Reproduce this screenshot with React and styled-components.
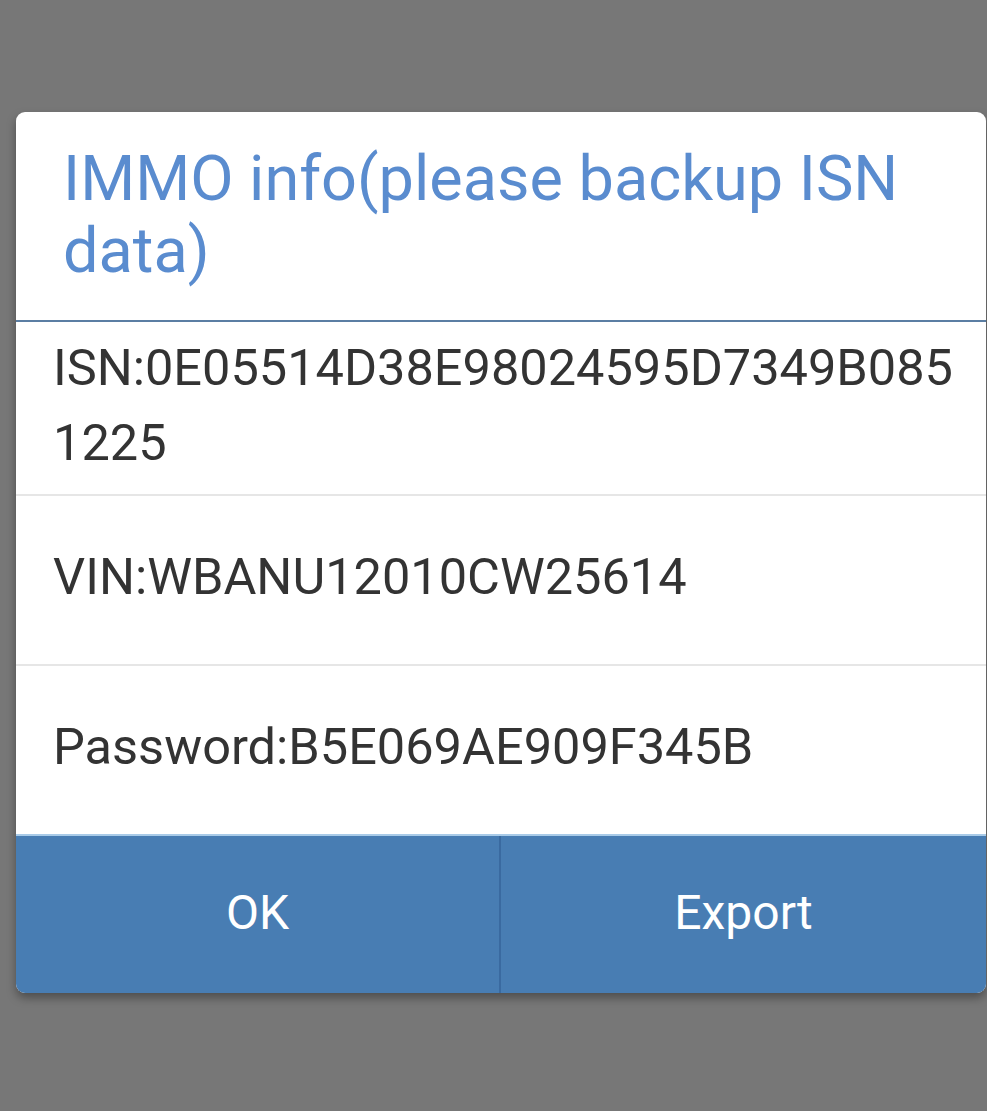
import React from "react";
import styled, { createGlobalStyle } from "styled-components";

const GlobalStyle = createGlobalStyle`
  html, body {
    margin: 0;
    padding: 0;
    background: #777777;
    font-family: Roboto, "Noto Sans", Arial, sans-serif;
  }
  body {
    height: 1111px;
    overflow: hidden;
  }
`;

const Screen = styled.div`
  padding: 112px 1px 0 16px;
`;

const Dialog = styled.div`
  width: 970px;
  background: #ffffff;
  border-radius: 9px;
  overflow: hidden;
  box-shadow: 0 5px 10px rgba(0, 0, 0, 0.35);
`;

const Header = styled.div`
  padding: 31px 40px 33px 47px;
  border-bottom: 2px solid #5b7ea3;
`;

const Title = styled.h1`
  margin: 0;
  font-size: 63px;
  line-height: 72px;
  font-weight: 400;
  color: #5a8ccf;
`;

const Row = styled.div`
  padding: ${(p) => (p.$first ? "8px 24px 14px 37px" : "43px 24px 50px 37px")};
  font-size: 50.5px;
  line-height: 75px;
  color: #333333;
  word-break: break-all;
  border-bottom: ${(p) => (p.$last ? "none" : "2px solid #e6e6e6")};
`;

const Actions = styled.div`
  display: grid;
  grid-template-columns: 483px 1fr;
  border-top: 2px solid #a9cbe8;
  background: #487db3;
`;

const ActionButton = styled.button`
  height: 157px;
  border: none;
  background: transparent;
  color: #ffffff;
  font-family: Roboto, "Noto Sans", Arial, sans-serif;
  font-size: 48px;
  padding: 0 0 4px;
  cursor: pointer;
  & + & {
    border-left: 2px solid #3a6aa0;
  }
`;

export default function App() {
  return (
    <>
      <GlobalStyle />
      <Screen>
        <Dialog>
          <Header>
            <Title>IMMO info(please backup ISN data)</Title>
          </Header>
          <Row $first>ISN:0E05514D38E98024595D7349B0851225</Row>
          <Row>VIN:WBANU12010CW25614</Row>
          <Row $last>Password:B5E069AE909F345B</Row>
          <Actions>
            <ActionButton>OK</ActionButton>
            <ActionButton>Export</ActionButton>
          </Actions>
        </Dialog>
      </Screen>
    </>
  );
}
